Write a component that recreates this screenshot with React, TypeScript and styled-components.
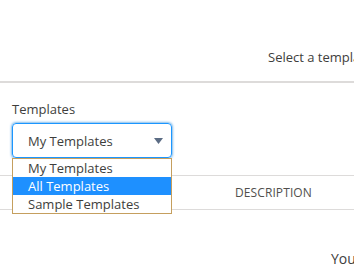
import * as React from "react";
import styled, { createGlobalStyle } from "styled-components";

const Global = createGlobalStyle`
  html, body {
    margin: 0;
    padding: 0;
    background: #fff;
  }
  body {
    font-family: "Open Sans", "Liberation Sans", sans-serif;
    color: #3e3e3c;
    overflow: hidden;
  }
`;

const Page = styled.div`
  width: 354px;
  height: 270px;
  overflow: hidden;
  display: flex;
  flex-direction: column;
`;

const Header = styled.div`
  height: 83px;
  border-bottom: 2px solid #dddbda;
  padding: 48px 0 0 268px;
  box-sizing: border-box;
  font-size: 13px;
  line-height: 18px;
  white-space: nowrap;
`;

const Body = styled.div`
  padding: 17px 0 0 12px;
  display: flex;
  flex-direction: column;
`;

const Label = styled.div`
  font-size: 13px;
  line-height: 18px;
  color: #3e3e3c;
`;

const SelectWrap = styled.div`
  position: relative;
  width: 160px;
  margin-top: 5px;
  z-index: 2;
`;

const SelectBox = styled.div`
  height: 35px;
  box-sizing: border-box;
  border: 1px solid #1b96ff;
  border-radius: 4px;
  box-shadow: 0 0 3px #0176d3;
  display: flex;
  align-items: center;
  justify-content: space-between;
  padding: 0 8px 0 15px;
  font-size: 13px;
`;

const Arrow = styled.svg`
  width: 9px;
  height: 6px;
  fill: #5b6c84;
`;

const Options = styled.ul`
  position: absolute;
  top: 100%;
  left: 0;
  width: 160px;
  box-sizing: border-box;
  margin: 0;
  padding: 0;
  list-style: none;
  background: #fff;
  border: 1px solid #c59f5e;
`;

const Option = styled.li<{ $active?: boolean }>`
  height: 18px;
  line-height: 18px;
  padding-left: 15px;
  font-size: 13px;
  background: ${(p) => (p.$active ? "#1e90ff" : "#fff")};
  color: ${(p) => (p.$active ? "#fff" : "#3e3e3c")};
`;

const TableHead = styled.div`
  margin-top: 17px;
  height: 35px;
  box-sizing: border-box;
  border-top: 1px solid #dddbda;
  border-bottom: 1px solid #dddbda;
  display: flex;
  align-items: center;
  padding-left: 235px;
  font-size: 12px;
  color: #514f4d;
  letter-spacing: 0.1px;
`;

const Empty = styled.div`
  margin-top: 39px;
  padding-left: 331px;
  font-size: 14px;
  line-height: 20px;
  white-space: nowrap;
`;

export default function App() {
  return (
    <Page>
      <Global />
      <Header>Select a template to start with</Header>
      <Body>
        <Label>Templates</Label>
        <SelectWrap>
          <SelectBox>
            My Templates
            <Arrow viewBox="0 0 9 6">
              <path d="M0 0h9L4.5 6z" />
            </Arrow>
          </SelectBox>
          <Options>
            <Option>My Templates</Option>
            <Option $active>All Templates</Option>
            <Option>Sample Templates</Option>
          </Options>
        </SelectWrap>
      </Body>
      <TableHead>DESCRIPTION</TableHead>
      <Empty>You have no templates</Empty>
    </Page>
  );
}
